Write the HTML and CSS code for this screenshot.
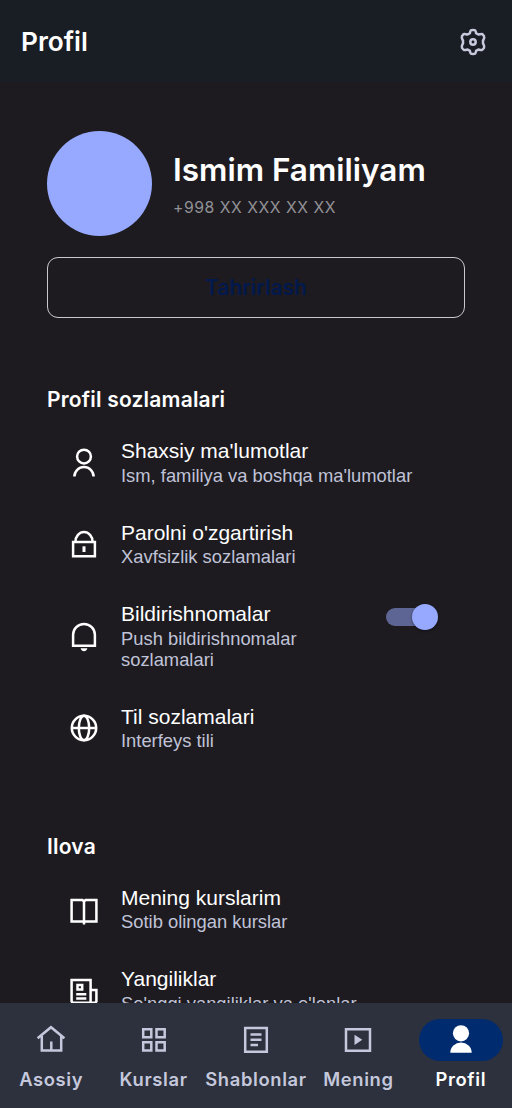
FILE: index.html
```
<!DOCTYPE html>
<html lang="uz">
<head>
<meta charset="utf-8">
<meta name="viewport" content="width=device-width, initial-scale=1">
<title>Profil</title>
<link rel="stylesheet" href="styles.css">
</head>
<body>
<div class="app">
  <header class="topbar">
    <h1 class="topbar-title">Profil</h1>
    <svg class="icon gear" viewBox="0 0 32 32"><path d="M12.9 7.1 C13.5 4.2 13.8 4 16 4 C18.2 4 18.5 4.2 19.1 7.1 L21.4 8.5 C25 7.6 25.3 7.6 27 10.1 C27.7 12 27.2 12.3 26 14.6 V17.4 C27.2 19.7 27.7 20 27 21.9 C25.3 24.4 25 24.4 21.4 23.5 L19.1 24.9 C18.5 27.8 18.2 28 16 28 C13.8 28 13.5 27.8 12.9 24.9 L10.6 23.5 C7 24.4 6.7 24.4 5 21.9 C4.3 20 4.8 19.7 6 17.4 V14.6 C4.8 12.3 4.3 12 5 10.1 C6.7 7.6 7 7.6 10.6 8.5 Z"/><circle cx="16" cy="16" r="2.7"/></svg>
  </header>
  <main class="content">
    <section class="user">
      <div class="avatar"></div>
      <div class="user-info">
        <h2 class="name">Ismim Familiyam</h2>
        <p class="phone">+998 XX XXX XX XX</p>
      </div>
    </section>
    <button class="edit">Tahrirlash</button>
    <section class="group">
      <h3 class="group-title">Profil sozlamalari</h3>
      <div class="row">
        <svg class="icon" viewBox="0 0 32 32"><circle cx="16" cy="9.6" r="6.9"/><path d="M6.4 29.6A9.6 9.6 0 0 1 25.6 29.6"/></svg>
        <div class="text"><p class="label">Shaxsiy ma'lumotlar</p><p class="sub">Ism, familiya va boshqa ma'lumotlar</p></div>
      </div>
      <div class="row">
        <svg class="icon" viewBox="0 0 32 32"><path d="M5.1 14.1H26.9V28.3H5.1ZM7.4 14A8.6 10 0 0 1 24.6 14"/><path class="fill" d="M14.5 18.3H17.5V24H14.5Z"/></svg>
        <div class="text"><p class="label">Parolni o'zgartirish</p><p class="sub">Xavfsizlik sozlamalari</p></div>
      </div>
      <div class="row">
        <svg class="icon" viewBox="0 0 32 32"><path d="M5.1 25.8V14.8A10.9 10.9 0 0 1 26.9 14.8V25.8Z"/><path class="fill" d="M12.6 28.2H19.4C18.6 32.2 13.4 32.2 12.6 28.2Z"/></svg>
        <div class="text"><p class="label">Bildirishnomalar</p><p class="sub">Push bildirishnomalar<br>sozlamalari</p></div>
        <div class="switch"><span class="knob"></span></div>
      </div>
      <div class="row">
        <svg class="icon" viewBox="0 0 32 32"><circle cx="16" cy="16" r="12.2"/><ellipse cx="16" cy="16" rx="5.2" ry="12.2"/><path d="M4 16H28"/></svg>
        <div class="text"><p class="label">Til sozlamalari</p><p class="sub">Interfeys tili</p></div>
      </div>
    </section>
    <section class="group">
      <h3 class="group-title">Ilova</h3>
      <div class="row">
        <svg class="icon" viewBox="0 0 32 32"><path d="M16 30.5V7.5L14.5 6.1H3.6V27.5H28.4V6.1H17.5L16 7.5"/></svg>
        <div class="text"><p class="label">Mening kurslarim</p><p class="sub">Sotib olingan kurslar</p></div>
      </div>
      <div class="row">
        <svg class="icon" viewBox="0 0 32 32"><path d="M22.6 27.5V4.9H3.6V26.5L5 27.8H27L28.4 26.5V14.9H23M8.2 19.2H18.3M8.2 23.4H18.3"/><path d="M9.5 9.9H14.2V14.4H9.5Z"/></svg>
        <div class="text"><p class="label">Yangiliklar</p><p class="sub">So'nggi yangiliklar va e'lonlar</p></div>
      </div>
    </section>
  </main>
  <nav class="tabs">
    <a class="tab"><span class="pill"><svg class="icon" viewBox="0 0 32 32"><path d="M2.6 14.2L16 3.2L29.4 14.2M6.8 12V26.5H26.2V12M16.3 17.5V26"/></svg></span><span>Asosiy</span></a>
    <a class="tab"><span class="pill"><svg class="icon" viewBox="0 0 32 32"><path d="M5.2 5.2H13.3V13.3H5.2ZM18.5 5.2H26.7V13.3H18.5ZM5.2 18.3H13.3V26.5H5.2ZM18.5 18.3H26.7V26.5H18.5Z"/></svg></span><span>Kurslar</span></a>
    <a class="tab"><span class="pill"><svg class="icon" viewBox="0 0 32 32"><path d="M5.2 4H26.8V27.8H5.2ZM10.5 10.6H21.5M10.5 15.8H21.5M10.5 21H18"/></svg></span><span>Shablonlar</span></a>
    <a class="tab"><span class="pill"><svg class="icon" viewBox="0 0 32 32"><path d="M4 5.2H28V26.7H4Z"/><path class="fill" d="M12.5 10.8L20.3 15.8L12.5 20.9Z"/></svg></span><span>Mening</span></a>
    <a class="tab active"><span class="pill"><svg class="icon" viewBox="0 0 32 32"><circle class="fill" cx="16" cy="9.3" r="8.1"/><path class="fill" d="M5.3 28.8A10.7 10.4 0 0 1 26.7 28.8Z"/></svg></span><span>Profil</span></a>
  </nav>
</div>
</body>
</html>
```
FILE: styles.css
```
* { box-sizing: border-box; margin: 0; padding: 0; }
body { background: #1d1b20; color: #fff; font-family: Inter, sans-serif; }
.app { height: 1108px; display: flex; flex-direction: column; overflow: hidden; }
.icon { width: 32px; height: 32px; flex: none; fill: none; stroke: currentColor; stroke-width: 2.5; }
.icon .fill { fill: currentColor; stroke: none; }
.topbar { height: 82px; flex: none; display: flex; align-items: center; justify-content: space-between; padding: 2px 23px 0 21px; background: #191d24; }
.topbar-title { font-size: 26.25px; font-weight: 600; padding-bottom: 2px; }
.gear { color: #c8c9dc; }
.content { flex: 1; min-height: 0; overflow: hidden; padding: 49px 47px 0; }
.user { display: flex; align-items: center; gap: 21px; }
.avatar { width: 105px; height: 105px; border-radius: 50%; background: #97a9ff; }
.name { font-size: 31.5px; line-height: 40px; font-weight: 600; white-space: nowrap; }
.phone { margin-top: 7px; font-size: 15.75px; line-height: 21px; letter-spacing: .53px; color: #929196; }
.edit { display: block; width: 418px; height: 61px; margin-top: 21px; border: 1.5px solid #c9c9cb; border-radius: 11px; background: transparent; color: #02194d; font: 600 21px Inter, sans-serif; }
.group-title { font-size: 21px; line-height: 28px; font-weight: 600; letter-spacing: .2px; }
.group { padding-top: 68px; }
.group + .group { padding-top: 65px; }
.row { display: flex; align-items: center; gap: 21px; padding: 16.5px 27px 16.5px 21px; }
.group-title + .row { padding-top: 23.2px; }
.row .icon { margin-top: 3px; }
.text { font-family: "Liberation Sans", Arial, sans-serif; flex: 1; white-space: nowrap; }
.label { font-size: 21px; line-height: 27.5px; }
.sub { font-size: 18.375px; line-height: 21px; color: #c0c3d7; }
.switch { width: 52px; height: 18px; margin-bottom: 36px; border-radius: 9px; background: linear-gradient(#5d6595, #5d6595) left / 46px 100% no-repeat; display: flex; align-items: center; justify-content: flex-end; }
.knob { width: 26px; height: 26px; border-radius: 50%; background: #97a9ff; box-shadow: 0 1px 3px #0006; flex: none; }
.tabs { height: 105px; flex: none; display: grid; grid-template-columns: repeat(5, 1fr); padding-top: 16px; background: #2c313d; }
.tab { display: flex; flex-direction: column; align-items: center; gap: 7px; color: #c5c8dc; font-size: 18.375px; line-height: 22px; font-weight: 600; letter-spacing: .65px; }
.pill { width: 84px; height: 42px; border-radius: 21px; display: grid; place-items: center; }
.active { color: #fff; }
.active .pill { background: #002b6f; }
```
